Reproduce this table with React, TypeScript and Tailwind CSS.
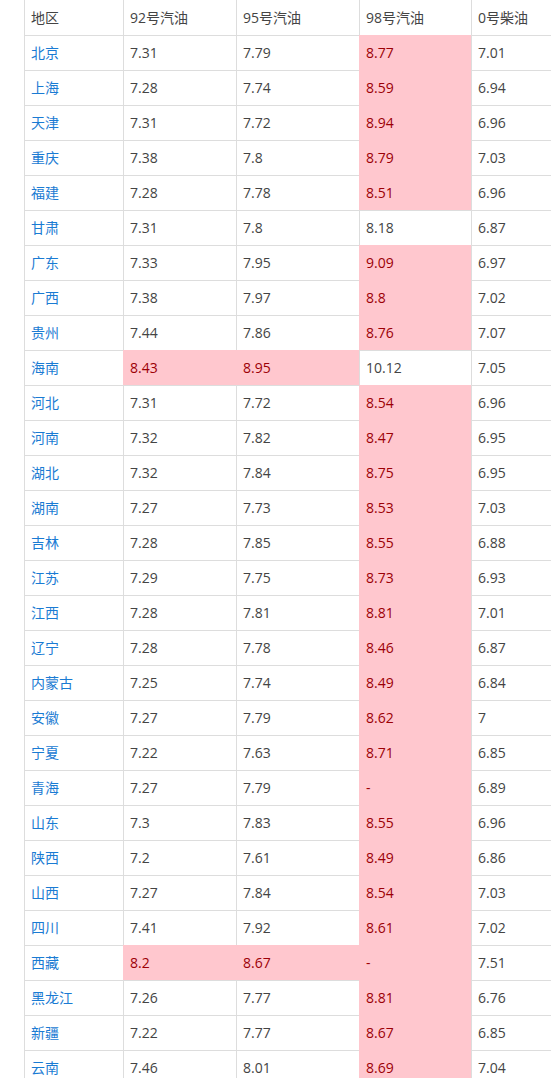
const headers = ["地区", "92号汽油", "95号汽油", "98号汽油", "0号柴油"];

// [地区, 92, 95, 98, 0, 高亮列]
const rows: [string, string, string, string, string, number[]][] = [
  ["北京", "7.31", "7.79", "8.77", "7.01", [3]],
  ["上海", "7.28", "7.74", "8.59", "6.94", [3]],
  ["天津", "7.31", "7.72", "8.94", "6.96", [3]],
  ["重庆", "7.38", "7.8", "8.79", "7.03", [3]],
  ["福建", "7.28", "7.78", "8.51", "6.96", [3]],
  ["甘肃", "7.31", "7.8", "8.18", "6.87", []],
  ["广东", "7.33", "7.95", "9.09", "6.97", [3]],
  ["广西", "7.38", "7.97", "8.8", "7.02", [3]],
  ["贵州", "7.44", "7.86", "8.76", "7.07", [3]],
  ["海南", "8.43", "8.95", "10.12", "7.05", [1, 2]],
  ["河北", "7.31", "7.72", "8.54", "6.96", [3]],
  ["河南", "7.32", "7.82", "8.47", "6.95", [3]],
  ["湖北", "7.32", "7.84", "8.75", "6.95", [3]],
  ["湖南", "7.27", "7.73", "8.53", "7.03", [3]],
  ["吉林", "7.28", "7.85", "8.55", "6.88", [3]],
  ["江苏", "7.29", "7.75", "8.73", "6.93", [3]],
  ["江西", "7.28", "7.81", "8.81", "7.01", [3]],
  ["辽宁", "7.28", "7.78", "8.46", "6.87", [3]],
  ["内蒙古", "7.25", "7.74", "8.49", "6.84", [3]],
  ["安徽", "7.27", "7.79", "8.62", "7", [3]],
  ["宁夏", "7.22", "7.63", "8.71", "6.85", [3]],
  ["青海", "7.27", "7.79", "-", "6.89", [3]],
  ["山东", "7.3", "7.83", "8.55", "6.96", [3]],
  ["陕西", "7.2", "7.61", "8.49", "6.86", [3]],
  ["山西", "7.27", "7.84", "8.54", "7.03", [3]],
  ["四川", "7.41", "7.92", "8.61", "7.02", [3]],
  ["西藏", "8.2", "8.67", "-", "7.51", [1, 2, 3]],
  ["黑龙江", "7.26", "7.77", "8.81", "6.76", [3]],
  ["新疆", "7.22", "7.77", "8.67", "6.85", [3]],
  ["云南", "7.46", "8.01", "8.69", "7.04", [3]],
];

const grid = "grid grid-cols-[99px_113px_123px_112px_100px]";

const App = () => {
  return (
    <div
      className="w-[551px] h-[1078px] overflow-hidden bg-white text-[14px] text-[#444]"
      style={{ fontFamily: '"Open Sans", "Noto Sans CJK SC", sans-serif' }}
    >
      <div className="ml-[24px] w-[547px]">
        <div className={grid}>
          {headers.map((h) => (
            <div key={h} className="h-[35px] flex items-center pl-[6px] pb-[1px] border-l border-[#ddd]">
              {h}
            </div>
          ))}
        </div>
        {rows.map((r) => (
          <div key={r[0]} className={grid}>
            {r.slice(0, 5).map((v, i) => {
              const hot = r[5].includes(i);
              return (
                <div
                  key={i}
                  className={
                    "h-[35px] flex items-center pl-[6px] pb-[1px] border-t border-l " +
                    (hot
                      ? "bg-[#ffc7ce] border-[#ffc7ce] text-[#9c0006]"
                      : "border-[#ddd]") +
                    (i === 0 ? " text-[#1a7bd3]" : "")
                  }
                >
                  {v as string}
                </div>
              );
            })}
          </div>
        ))}
      </div>
    </div>
  );
};

export default App;
